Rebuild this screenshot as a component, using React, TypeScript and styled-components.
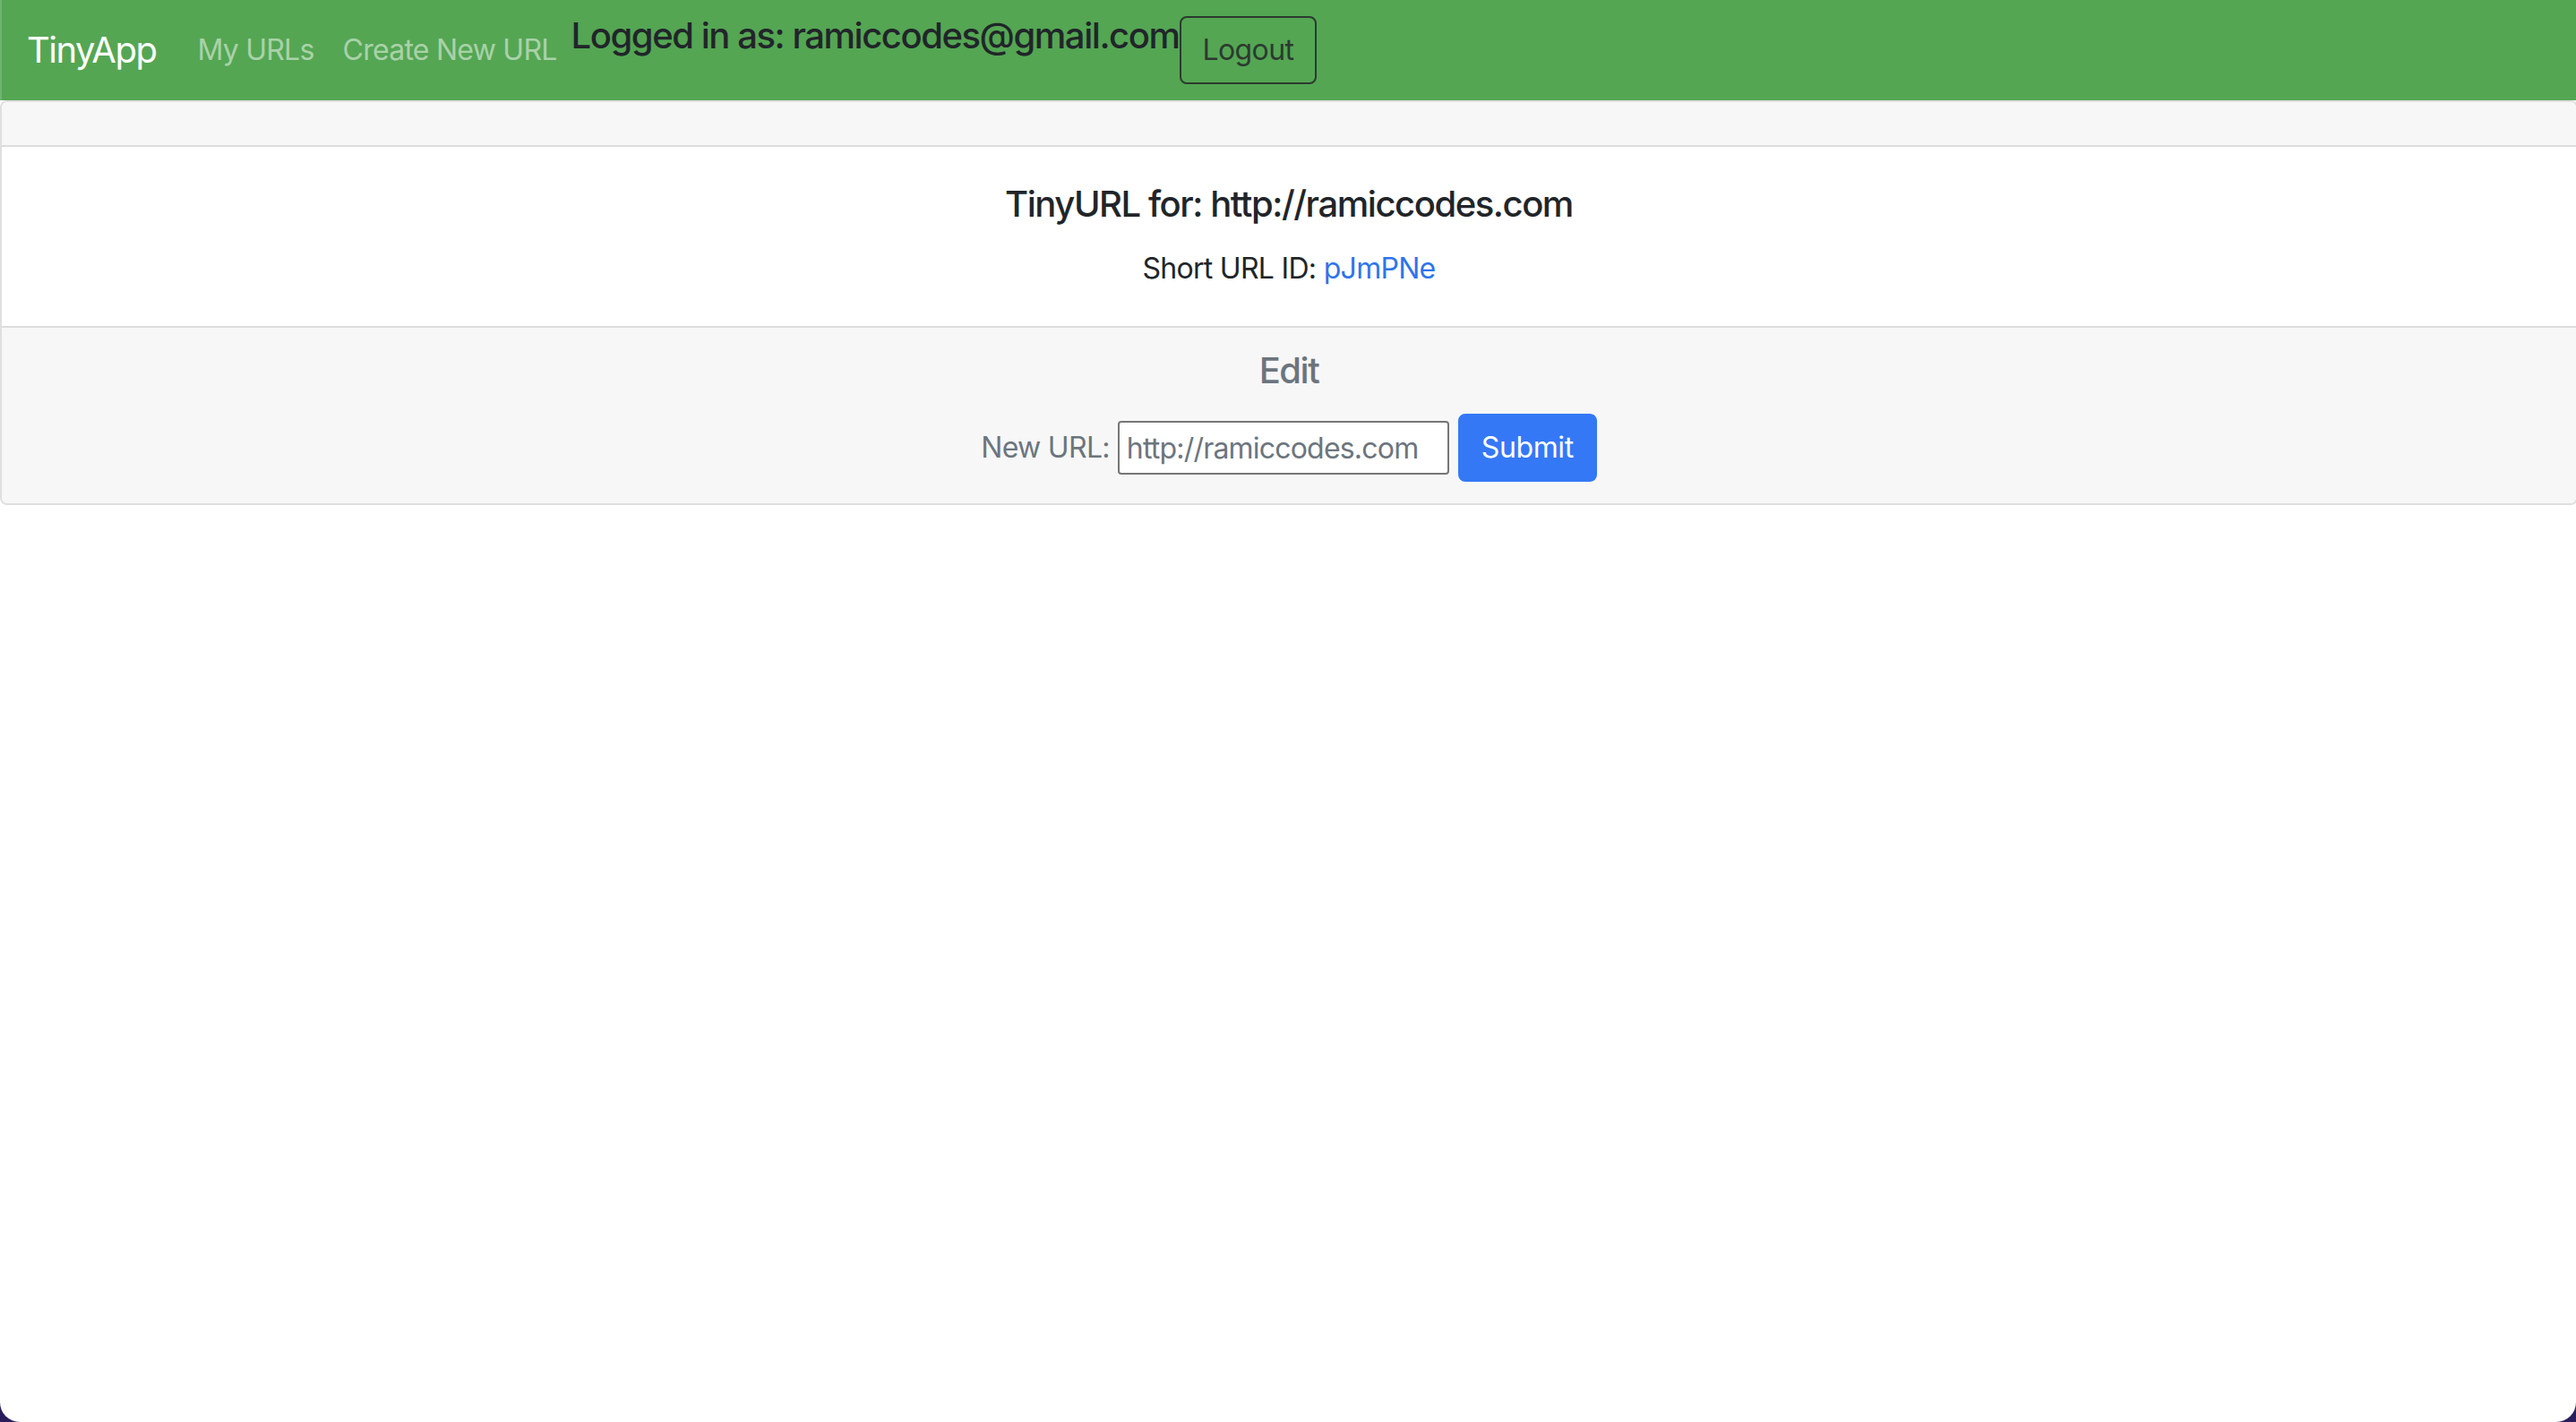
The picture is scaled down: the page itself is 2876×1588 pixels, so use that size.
import React from "react";
import styled, { createGlobalStyle } from "styled-components";

const GlobalStyle = createGlobalStyle`
  html, body {
    margin: 0;
    padding: 0;
    background: #2b1d5c;
  }
  body {
    font-family: Inter, "Noto Sans", Roboto, sans-serif;
    color: #212529;
  }
  * { box-sizing: border-box; }
`;

const Page = styled.div`
  min-height: 100vh;
  background: #ffffff;
  border-bottom-left-radius: 22px;
  border-bottom-right-radius: 22px;
  overflow: hidden;
`;

const Navbar = styled.nav`
  display: flex;
  align-items: center;
  background: #54a653;
  padding: 16px 32px 16px 28px;
  border-left: 2px solid #6fb56e;
`;

const Brand = styled.a`
  font-size: 40px;
  line-height: 60px;
  padding: 10px 0;
  margin-right: 30px;
  color: #ffffff;
  text-decoration: none;
  letter-spacing: -1.5px;
`;

const NavLink = styled.a`
  font-size: 32px;
  line-height: 48px;
  padding: 16px 16px;
  color: rgba(255, 255, 255, 0.5);
  text-decoration: none;
  letter-spacing: -0.75px;
`;

const LoggedIn = styled.h5`
  align-self: flex-start;
  margin: 0 0 16px;
  font-size: 40px;
  line-height: 48px;
  font-weight: 500;
  color: #212529;
  letter-spacing: -1.45px;
`;

const OutlineButton = styled.button`
  font-family: inherit;
  font-size: 32px;
  line-height: 48px;
  padding: 12px 24px;
  border: 2px solid #2c3a2f;
  border-radius: 8px;
  background: transparent;
  color: #2c3a2f;
  letter-spacing: -0.6px;
`;

const Card = styled.section`
  margin-right: -2px;
  border: 2px solid rgba(0, 0, 0, 0.125);
  border-radius: 8px;
  background: #fff;
`;

const CardHeader = styled.div`
  height: 50px;
  background: #f7f7f7;
  border-bottom: 2px solid #dcdcdc;
  border-radius: 6px 6px 0 0;
`;

const CardBody = styled.div`
  padding: 40px;
  text-align: center;
`;

const CardFooter = styled.div<{ $muted?: boolean }>`
  padding: 24px 40px;
  background: #f7f7f7;
  border-top: 2px solid #dcdcdc;
  border-radius: 0 0 6px 6px;
  text-align: center;
  color: ${(p) => (p.$muted ? "#6c757d" : "#212529")};
`;

const Title = styled.h5<{ $muted?: boolean }>`
  margin: 0 0 24px;
  font-size: 40px;
  line-height: 48px;
  font-weight: 500;
  color: ${(p) => (p.$muted ? "#6c757d" : "#212529")};
  letter-spacing: -1.45px;
`;

const Text = styled.p`
  margin: 0;
  font-size: 32px;
  line-height: 48px;
  letter-spacing: -0.7px;
`;

const Link = styled.a`
  color: #2f74ea;
  text-decoration: none;
`;

const Form = styled.form`
  display: flex;
  justify-content: center;
  align-items: center;
  gap: 9px;
`;

const Label = styled.label`
  font-size: 32px;
  line-height: 48px;
  color: #6c757d;
  letter-spacing: -0.7px;
`;

const Input = styled.input`
  width: 370px;
  height: 60px;
  font-family: inherit;
  font-size: 32px;
  padding: 2px 8px;
  border: 2px solid #767676;
  border-radius: 4px;
  color: #6c757d;
  background: #fff;
  letter-spacing: -0.8px;
`;

const PrimaryButton = styled.button`
  font-family: inherit;
  font-size: 32px;
  line-height: 48px;
  padding: 12px 24px;
  border: 2px solid #3478f6;
  border-radius: 8px;
  background: #3478f6;
  color: #fff;
  margin-left: 1px;
  letter-spacing: -0.4px;
`;

export default function App() {
  return (
    <>
      <GlobalStyle />
      <Page>
        <Navbar>
          <Brand href="#">TinyApp</Brand>
          <NavLink href="#">My URLs</NavLink>
          <NavLink href="#">Create New URL</NavLink>
          <LoggedIn>Logged in as: ramiccodes@gmail.com</LoggedIn>
          <OutlineButton type="button">Logout</OutlineButton>
        </Navbar>
        <Card>
          <CardHeader />
          <CardBody>
            <Title>TinyURL for: http://ramiccodes.com</Title>
            <Text>
              Short URL ID: <Link href="#">pJmPNe</Link>
            </Text>
          </CardBody>
          <CardFooter $muted>
            <Title $muted>Edit</Title>
            <Form onSubmit={(e) => e.preventDefault()}>
              <Label htmlFor="longURL">New URL:</Label>
              <Input id="longURL" type="text" defaultValue="http://ramiccodes.com" />
              <PrimaryButton type="submit">Submit</PrimaryButton>
            </Form>
          </CardFooter>
        </Card>
      </Page>
    </>
  );
}
